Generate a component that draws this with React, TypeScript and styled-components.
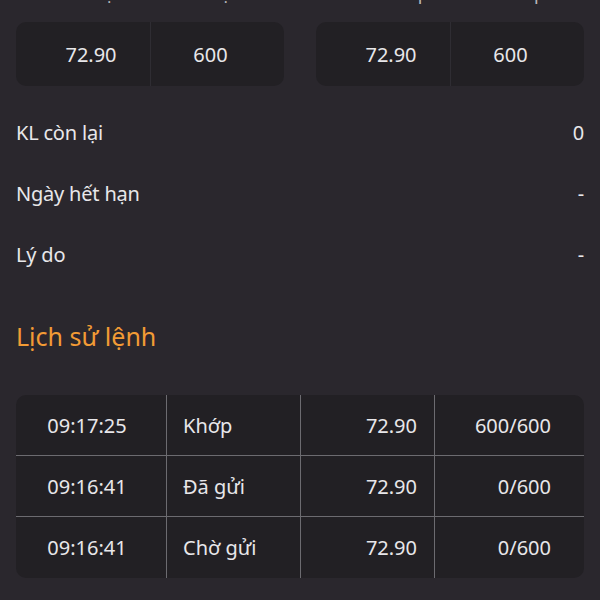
import React from 'react';
import styled, { createGlobalStyle } from 'styled-components';

const GlobalStyle = createGlobalStyle`
  html, body {
    margin: 0;
    padding: 0;
    background: #2a272d;
    overflow: hidden;
  }
  body {
    font-family: "Noto Sans", "Open Sans", sans-serif;
    color: #e8e7ea;
  }
`;

const Page = styled.div`
  margin-top: -19px;
  padding: 0 16px;
`;

const TopGrid = styled.div`
  display: grid;
  grid-template-columns: 1fr 1fr;
  column-gap: 32px;
  row-gap: 17px;
`;

const LabelRow = styled.div`
  display: grid;
  grid-template-columns: 1fr 1fr;
`;

const Label = styled.div<{ $shift: number }>`
  font-size: 18px;
  line-height: 24px;
  color: #b9b8bd;
  text-align: center;
  transform: translateX(${({ $shift }) => $shift}px);
`;

const ValueCard = styled.div`
  display: grid;
  grid-template-columns: 1fr 1fr;
  height: 64px;
  background: #222024;
  border-radius: 10px;
`;

const ValueCell = styled.div<{ $first?: boolean }>`
  display: flex;
  align-items: center;
  justify-content: center;
  font-size: 20px;
  padding: ${({ $first }) => ($first ? '0 0 0 16px' : '0 14px 0 0')};
  border-left: ${({ $first }) => ($first ? 'none' : '1px solid #2f2d33')};
`;

const InfoList = styled.div`
  margin-top: 16px;
`;

const InfoRow = styled.div`
  display: flex;
  justify-content: space-between;
  align-items: center;
  height: 61px;
  font-size: 20px;
  letter-spacing: -0.2px;
`;

const Heading = styled.h2`
  margin: 33px 0 0;
  height: 36px;
  line-height: 36px;
  font-size: 25px;
  font-weight: 400;
  color: #f29b35;
`;

const HistoryTable = styled.div`
  margin-top: 41px;
  background: #222024;
  border-radius: 10px;
`;

const HistoryRow = styled.div<{ $last?: boolean }>`
  display: grid;
  grid-template-columns: 150px 134px 134px 1fr;
  height: 61px;
  border-bottom: ${({ $last }) => ($last ? 'none' : '1px solid #6c6b70')};
  box-sizing: border-box;
`;

const Cell = styled.div<{ $align: 'center' | 'left' | 'right'; $pad?: number; $divider?: boolean }>`
  display: flex;
  align-items: center;
  font-size: 20px;
  justify-content: ${({ $align }) =>
    $align === 'center' ? 'center' : $align === 'left' ? 'flex-start' : 'flex-end'};
  padding: 0 ${({ $pad = 0 }) => $pad}px 0 0;
  padding-left: ${({ $align, $pad = 0 }) => ($align === 'left' ? $pad : 0)}px;
  padding-right: ${({ $align, $pad = 0 }) => ($align === 'left' ? 0 : $pad)}px;
  border-left: ${({ $divider }) => ($divider ? '1px solid #6c6b70' : 'none')};
`;

const orders = [
  { time: '09:17:25', status: 'Khớp', price: '72.90', qty: '600/600' },
  { time: '09:16:41', status: 'Đã gửi', price: '72.90', qty: '0/600' },
  { time: '09:16:41', status: 'Chờ gửi', price: '72.90', qty: '0/600' },
];

const info = [
  { label: 'KL còn lại', value: '0' },
  { label: 'Ngày hết hạn', value: '-' },
  { label: 'Lý do', value: '-' },
];

export default function App() {
  return (
    <>
      <GlobalStyle />
      <Page>
        <TopGrid>
          <LabelRow>
            <Label $shift={8}>Giá đặt</Label>
            <Label $shift={-6}>KL đặt</Label>
          </LabelRow>
          <LabelRow>
            <Label $shift={8}>Giá khớp</Label>
            <Label $shift={-6}>KL khớp</Label>
          </LabelRow>
          <ValueCard>
            <ValueCell $first>72.90</ValueCell>
            <ValueCell>600</ValueCell>
          </ValueCard>
          <ValueCard>
            <ValueCell $first>72.90</ValueCell>
            <ValueCell>600</ValueCell>
          </ValueCard>
        </TopGrid>

        <InfoList>
          {info.map((row) => (
            <InfoRow key={row.label}>
              <span>{row.label}</span>
              <span>{row.value}</span>
            </InfoRow>
          ))}
        </InfoList>

        <Heading>Lịch sử lệnh</Heading>

        <HistoryTable>
          {orders.map((o, i) => (
            <HistoryRow key={i} $last={i === orders.length - 1}>
              <Cell $align="center" $pad={8}>{o.time}</Cell>
              <Cell $align="left" $pad={16} $divider>{o.status}</Cell>
              <Cell $align="right" $pad={17} $divider>{o.price}</Cell>
              <Cell $align="right" $pad={33} $divider>{o.qty}</Cell>
            </HistoryRow>
          ))}
        </HistoryTable>
      </Page>
    </>
  );
}
